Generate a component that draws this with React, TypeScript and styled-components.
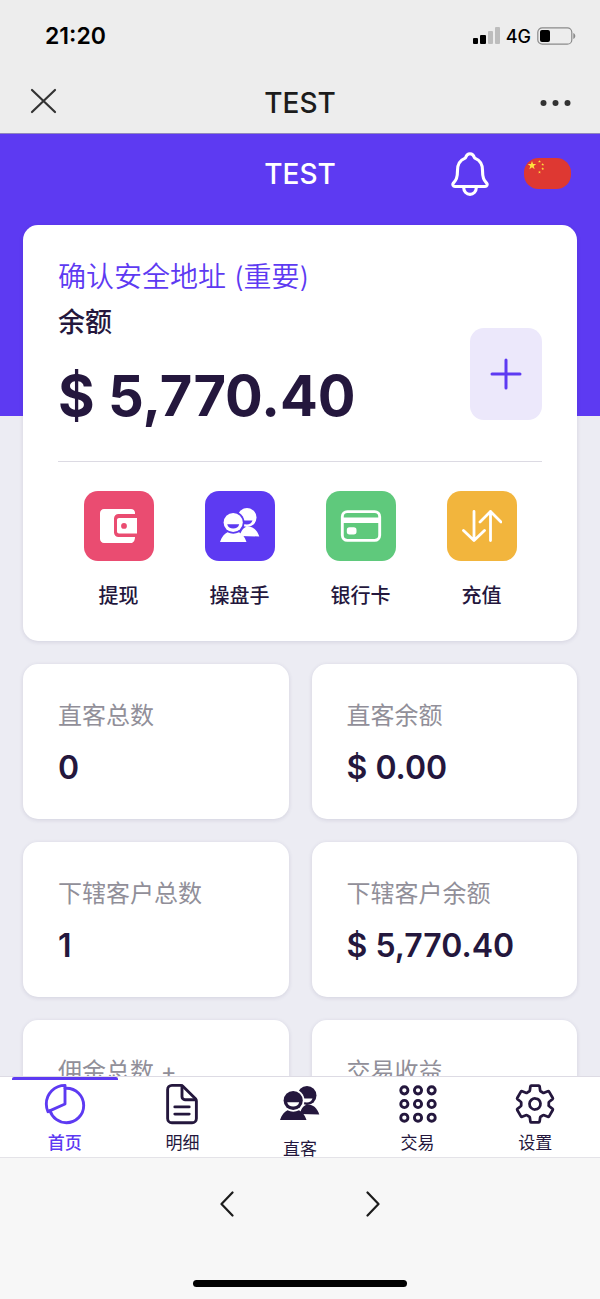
import React from "react";
import styled, { createGlobalStyle } from "styled-components";
import {
  IoAppsOutline,
  IoCardOutline,
  IoDocumentTextOutline,
  IoNotificationsOutline,
  IoPieChartOutline,
  IoSettingsOutline,
} from "react-icons/io5";

const color = {
  brand: "#5d3af2",
  ink: "#24173d",
  muted: "#918f99",
  page: "#ececf3",
  tint: "#ece8fb",
};

const GlobalStyle = createGlobalStyle`
  *, *::before, *::after { box-sizing: border-box; }
  body {
    margin: 0;
    background: ${color.page};
    color: ${color.ink};
    font-family: Inter, "Noto Sans CJK SC", sans-serif;
  }
  button { border: 0; padding: 0; background: none; color: inherit; font: inherit; cursor: pointer; }
  a { color: inherit; text-decoration: none; }
  h1, h2, p, dl, dd { margin: 0; }
  svg { display: block; flex: none; }
`;

const Screen = styled.div`
  display: flex;
  flex-direction: column;
  height: 100vh;
`;

const BrowserTop = styled.header`
  flex: none;
  background: #ededed;
  border-bottom: 1px solid #8f86bd;
`;

const StatusBar = styled.div`
  display: flex;
  align-items: center;
  justify-content: space-between;
  height: 72px;
  padding: 0 24px 0 45px;
  color: #000;
`;

const Clock = styled.time`
  font-size: 23px;
  font-weight: 600;
`;

const StatusIcons = styled.div`
  display: flex;
  align-items: center;
  gap: 6px;
  font-size: 18px;
  font-weight: 500;
`;

const TitleBar = styled.div`
  display: grid;
  grid-template-columns: 1fr auto 1fr;
  align-items: center;
  height: 61px;
  padding: 0 29px;
  color: #1c1c1c;
`;

const Title = styled.h1`
  font-size: 28px;
  font-weight: 500;
  line-height: 40px;
`;

const EndGroup = styled.div`
  display: flex;
  align-items: center;
  justify-content: flex-end;
  gap: 29px;
`;

const Content = styled.main`
  flex: 1 1 0;
  min-height: 0;
  overflow-x: hidden;
  overflow-y: auto;
  scrollbar-width: none;
  background: linear-gradient(${color.brand} 282px, ${color.page} 282px);
`;

const AppBar = styled(TitleBar)`
  height: 79px;
  color: #fff;
`;

const Sections = styled.div`
  display: grid;
  gap: 23px;
  padding: 12px 23px 23px;
`;

const Card = styled.section`
  border-radius: 15px;
  background: #fff;
  box-shadow: 0 1px 4px rgba(60, 50, 100, 0.14);
`;

const Wallet = styled(Card)`
  padding: 30px 35px;
`;

const NoticeLink = styled.a`
  display: block;
  color: ${color.brand};
  font-size: 28px;
  font-weight: 350;
  line-height: 45px;
`;

const BalanceRow = styled.div`
  display: flex;
  align-items: center;
  justify-content: space-between;
  padding-bottom: 13px;
  border-bottom: 1px solid #dcdae3;
`;

const BalanceLabel = styled.h2`
  font-size: 27px;
  font-weight: 500;
  line-height: 45px;
`;

const Amount = styled.p`
  font-size: 56px;
  font-weight: 700;
  line-height: 103px;
  white-space: nowrap;
`;

const AddButton = styled.button`
  display: grid;
  place-items: center;
  width: 72px;
  height: 92px;
  border-radius: 14px;
  background: ${color.tint};
  color: ${color.brand};
`;

const Actions = styled.div`
  display: grid;
  grid-template-columns: repeat(4, 1fr);
  padding-top: 29px;
`;

const Action = styled.button`
  display: flex;
  flex-direction: column;
  align-items: center;
  gap: 20px;
  font-size: 20px;
  font-weight: 500;
  line-height: 30px;
`;

const Tile = styled.span<{ $fill: string }>`
  display: grid;
  place-items: center;
  width: 70px;
  height: 70px;
  border-radius: 14px;
  background: ${(p) => p.$fill};
  color: #fff;
`;

const Stats = styled.div`
  display: grid;
  grid-template-columns: 1fr 1fr;
  gap: 23px;
`;

const Stat = styled(Card).attrs({ as: "dl" })`
  padding: 34px 35px 26px;
`;

const StatLabel = styled.dt`
  margin-bottom: 9px;
  color: ${color.muted};
  font-size: 24px;
  line-height: 36px;
`;

const StatValue = styled.dd`
  min-height: 50px;
  font-size: 32px;
  font-weight: 600;
  line-height: 50px;
  white-space: nowrap;
`;

const TabBar = styled.nav`
  display: grid;
  grid-template-columns: repeat(5, 1fr);
  flex: none;
  height: 82px;
  padding: 0 6px;
  border-top: 1px solid #dddbe4;
  border-bottom: 1px solid #e4e3e8;
  background: #fff;
`;

const Tab = styled.a<{ $active?: boolean; $low?: boolean }>`
  display: flex;
  flex-direction: column;
  align-items: center;
  gap: ${(p) => (p.$low ? 9 : 3)}px;
  margin: 0 6px;
  padding-top: 1px;
  border-top: 3px solid ${(p) => (p.$active ? color.brand : "transparent")};
  border-radius: 2px 2px 0 0;
  color: ${(p) => (p.$active ? color.brand : color.ink)};
  font-size: 17px;
  font-weight: ${(p) => (p.$active ? 500 : 400)};
  line-height: 26px;
`;

const TabIcon = styled.span`
  display: grid;
  place-items: center;
  height: 46px;
`;

const BrowserBottom = styled.footer`
  display: flex;
  flex-direction: column;
  align-items: center;
  flex: none;
  justify-content: space-between;
  height: 141px;
  padding: 30px 0 12px;
  background: #f7f7f7;
  color: #1c1c1c;
`;

const History = styled.div`
  display: flex;
  gap: 114px;
`;

const HistoryButton = styled.button`
  display: grid;
  place-items: center;
  width: 32px;
  height: 32px;
`;

const HomeIndicator = styled.div`
  width: 214px;
  height: 7px;
  border-radius: 4px;
  background: #000;
`;

const SignalIcon = () => (
  <svg width="28" height="18" viewBox="0 0 28 18" aria-hidden="true">
    <rect x="1" y="11" width="5" height="6" rx="1" />
    <rect x="8" y="8" width="6" height="9" rx="1" />
    <rect x="16" y="4" width="5" height="13" rx="1" fill="#bdbdbd" />
    <rect x="23" y="0" width="5" height="17" rx="1" fill="#bdbdbd" />
  </svg>
);

const BatteryIcon = () => (
  <svg width="39" height="18" viewBox="0 0 39 18" aria-hidden="true">
    <rect x="0.8" y="0.8" width="34" height="16.4" rx="4.5" fill="none" stroke="#8a8a8a" strokeWidth="1.2" />
    <rect x="3" y="3" width="10" height="12" rx="2" />
    <path d="M36.3 6v6c1.200-.5 2-1.700 2-3s-.8-2.500-2-3z" fill="#8a8a8a" />
  </svg>
);

const CloseIcon = () => (
  <svg width="28" height="26" viewBox="0 0 28 26" fill="none" stroke="#333" strokeWidth="2.200" strokeLinecap="round" aria-hidden="true">
    <path d="M3 2l23 22M26 2L3 24" />
  </svg>
);

const MoreIcon = () => (
  <svg width="31" height="8" viewBox="0 0 31 8" fill="#333" aria-hidden="true">
    <circle cx="3.500" cy="4" r="3" />
    <circle cx="15.500" cy="4" r="3" />
    <circle cx="27.500" cy="4" r="3" />
  </svg>
);

const starPoints = (cx: number, cy: number, r: number) =>
  Array.from({ length: 10 }, (_, i) => {
    const a = (Math.PI / 5) * i - Math.PI / 2;
    const d = i % 2 ? r * 0.4 : r;
    return `${cx + d * Math.cos(a)},${cy + d * Math.sin(a)}`;
  }).join(" ");

const FlagIcon = () => (
  <svg width="47" height="31" viewBox="0 0 47 31" aria-hidden="true">
    <rect width="47" height="31" rx="14.500" fill="#de3832" />
    <g fill="#ffe33d">
      <polygon points={starPoints(8, 7.5, 4.5)} />
      <polygon points={starPoints(15.5, 3.5, 1.5)} />
      <polygon points={starPoints(18.7, 6.5, 1.5)} />
      <polygon points={starPoints(18.7, 10.8, 1.5)} />
      <polygon points={starPoints(15.5, 14.2, 1.5)} />
    </g>
  </svg>
);

const PlusIcon = () => (
  <svg width="32" height="32" viewBox="0 0 32 32" fill="none" stroke="currentColor" strokeWidth="3" strokeLinecap="round" aria-hidden="true">
    <path d="M16 2v28M2 16h28" />
  </svg>
);

const WalletIcon = () => (
  <svg width="38" height="36" viewBox="0 0 38 36" fill="currentColor" aria-hidden="true">
    <path d="M4 1h27c2.200 0 4 1.600 4 3.800V6H18.500C16 6 14 8 14 10.500v14c0 2.500 2 4.500 4.500 4.500H35c0 3.400-1.500 6-4 6H4c-2.200 0-4-1.800-4-4V5c0-2.200 1.800-4 4-4z" />
    <path fillRule="evenodd" d="M19 10h18v15.500H19c-1.100 0-2-.9-2-2V12c0-1.100.9-2 2-2zm5 5a2.900 2.900 0 100 5.800 2.900 2.900 0 000-5.800z" />
  </svg>
);

const PeopleIcon = ({ back }: { back: string }) => (
  <svg width="40" height="40" viewBox="0 0 40 40" fill="currentColor" aria-hidden="true">
    <path d="M20 30c1-5.500 3.500-8.500 7-9.500 5.500-.5 10 3 12.300 10z" />
    <circle cx="27" cy="11.500" r="9.500" />
    <path d="M21 14.500h11.500c-.8 2.700-3 4-5.700 4s-5-1.300-5.800-4z" fill={back} />
    <circle cx="13.200" cy="16.500" r="11.300" fill={back} />
    <path d="M13.200 26.500c8 0 12 4.500 14 10.500H20z" fill={back} />
    <circle cx="13.200" cy="16.500" r="9.600" />
    <path d="M7.200 18.300h12c-.7 2.900-3 4.300-6 4.300s-5.300-1.400-6-4.300z" fill={back} />
    <path d="M0 36c1.700-5 4.300-8.300 7.500-9.700 3.500 1.800 8 1.800 11.500 0 3.200 1.400 5.800 4.700 7.500 9.700z" />
  </svg>
);

const TransferIcon = () => (
  <svg width="40" height="32" viewBox="0 0 40 32" fill="none" stroke="currentColor" strokeWidth="2.800" strokeLinecap="round" strokeLinejoin="round" aria-hidden="true">
    <path d="M12 1.500v29M1.500 20.500L12 30.500l10.500-10M28.500 30.500v-29M18 12l10.500-10.500L39 12" />
  </svg>
);

const Chevron = ({ d }: { d: string }) => (
  <svg width="14" height="26" viewBox="0 0 14 26" fill="none" stroke="currentColor" strokeWidth="2.200" strokeLinecap="round" strokeLinejoin="round" aria-hidden="true">
    <path d={d} />
  </svg>
);

const actions = [
  { label: "提现", fill: "#ea4c71", icon: <WalletIcon /> },
  { label: "操盘手", fill: color.brand, icon: <PeopleIcon back={color.brand} /> },
  { label: "银行卡", fill: "#5fc97c", icon: <IoCardOutline size={46} /> },
  { label: "充值", fill: "#f2b53d", icon: <TransferIcon /> },
];

const stats = [
  { label: "直客总数", value: "0" },
  { label: "直客余额", value: "$ 0.00" },
  { label: "下辖客户总数", value: "1" },
  { label: "下辖客户余额", value: "$ 5,770.40" },
  { label: "佣金总数 +", value: "" },
  { label: "交易收益", value: "" },
];

const tabs = [
  { label: "首页", icon: <IoPieChartOutline size={46} />, active: true },
  { label: "明细", icon: <IoDocumentTextOutline size={46} /> },
  { label: "直客", icon: <PeopleIcon back="#fff" />, low: true },
  { label: "交易", icon: <IoAppsOutline size={46} /> },
  { label: "设置", icon: <IoSettingsOutline size={44} /> },
];

export default function App() {
  return (
    <Screen>
      <GlobalStyle />
      <BrowserTop>
        <StatusBar>
          <Clock>21:20</Clock>
          <StatusIcons>
            <SignalIcon />
            <span>4G</span>
            <BatteryIcon />
          </StatusIcons>
        </StatusBar>
        <TitleBar>
          <div>
            <button aria-label="关闭"><CloseIcon /></button>
          </div>
          <Title>TEST</Title>
          <EndGroup>
            <button aria-label="更多"><MoreIcon /></button>
          </EndGroup>
        </TitleBar>
      </BrowserTop>

      <Content>
        <AppBar>
          <div />
          <Title as="h2">TEST</Title>
          <EndGroup>
            <button aria-label="通知"><IoNotificationsOutline size={50} /></button>
            <button aria-label="语言"><FlagIcon /></button>
          </EndGroup>
        </AppBar>

        <Sections>
          <Wallet>
            <NoticeLink href="#address">确认安全地址 (重要)</NoticeLink>
            <BalanceRow>
              <div>
                <BalanceLabel>余额</BalanceLabel>
                <Amount>$ 5,770.40</Amount>
              </div>
              <AddButton aria-label="添加"><PlusIcon /></AddButton>
            </BalanceRow>
            <Actions>
              {actions.map((a) => (
                <Action key={a.label}>
                  <Tile $fill={a.fill}>{a.icon}</Tile>
                  {a.label}
                </Action>
              ))}
            </Actions>
          </Wallet>

          <Stats>
            {stats.map((s) => (
              <Stat key={s.label}>
                <StatLabel>{s.label}</StatLabel>
                <StatValue>{s.value}</StatValue>
              </Stat>
            ))}
          </Stats>
        </Sections>
      </Content>

      <TabBar>
        {tabs.map((t) => (
          <Tab key={t.label} href="#" $active={t.active} $low={t.low}>
            <TabIcon>{t.icon}</TabIcon>
            {t.label}
          </Tab>
        ))}
      </TabBar>

      <BrowserBottom>
        <History>
          <HistoryButton aria-label="后退"><Chevron d="M12.500 1.500L1.500 13l11 11.500" /></HistoryButton>
          <HistoryButton aria-label="前进"><Chevron d="M1.500 1.500L12.500 13l-11 11.500" /></HistoryButton>
        </History>
        <HomeIndicator />
      </BrowserBottom>
    </Screen>
  );
}
